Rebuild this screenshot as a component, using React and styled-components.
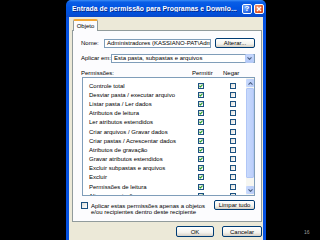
import React from "react";
import styled, { createGlobalStyle } from "styled-components";

const Global = createGlobalStyle`
  html, body { margin: 0; padding: 0; background: #000; }
  body { width: 320px; height: 240px; overflow: hidden; font-family: "Liberation Sans", Arial, sans-serif; }
`;

const Stage = styled.div`
  position: relative;
  width: 320px;
  height: 240px;
  background: #000;
  display: flex;
  overflow: hidden;
`;

const Window = styled.div`
  margin-left: 66px;
  width: 200px;
  height: 246px;
  display: flex;
  flex-direction: column;
`;

const TitleBar = styled.div`
  height: 17px;
  flex: none;
  border-radius: 5px 5px 0 0;
  background: linear-gradient(180deg, #3d8ff7 0%, #0a5ee6 12%, #0054e3 45%, #0250d9 80%, #0a48c8 100%);
  display: flex;
  align-items: center;
  padding: 0 2px 0 6px;
  gap: 2px;
`;

const Title = styled.div`
  flex: 1;
  color: #fff;
  font: bold 6.8px "Liberation Sans", Arial, sans-serif;
  letter-spacing: 0.05px;
  text-shadow: 1px 1px 0 #0a2a8a;
  white-space: nowrap;
  overflow: hidden;
`;

const CapButton = styled.div`
  width: 10px;
  height: 10px;
  border: 1px solid #fff;
  border-radius: 2px;
  box-sizing: border-box;
  display: flex;
  align-items: center;
  justify-content: center;
  color: #fff;
  font: bold 8px "Liberation Sans", Arial, sans-serif;
  background: ${(p) =>
    p.$close
      ? "radial-gradient(circle at 30% 30%, #f3a083, #e35a2b 60%, #c1391a)"
      : "radial-gradient(circle at 30% 30%, #7fb0ff, #2f6ee8 60%, #1c4fc7)"};
`;

const Body = styled.div`
  flex: 1;
  background: #ece9d8;
  border-left: 3px solid #0551e0;
  border-right: 3px solid #0551e0;
  padding: 2px 1px 0 3px;
  display: flex;
  flex-direction: column;
`;

const TabStrip = styled.div`
  height: 11px;
  display: flex;
  align-items: flex-end;
  padding-left: 1px;
`;

const Tab = styled.div`
  width: 25px;
  height: 12px;
  box-sizing: border-box;
  background: #fcfcfe;
  border: 1px solid #919b9c;
  border-bottom: none;
  border-top: 2px solid #f2a735;
  border-radius: 2px 2px 0 0;
  font-size: 6px;
  color: #000;
  display: flex;
  align-items: center;
  justify-content: center;
  margin-bottom: -1px;
  position: relative;
  z-index: 1;
`;

const Panel = styled.div`
  height: 192px;
  box-sizing: border-box;
  background: #fcfcfe;
  border: 1px solid #919b9c;
  padding: 7px 6px 0 8px;
  display: flex;
  flex-direction: column;
  font-size: 6px;
  color: #000;
`;

const FieldRow = styled.div`
  display: flex;
  align-items: center;
  height: ${(p) => p.$h || 10}px;
  margin-bottom: ${(p) => p.$mb || 0}px;
`;

const Label = styled.span`
  width: ${(p) => p.$w}px;
  flex: none;
  white-space: nowrap;
`;

const TextBox = styled.div`
  flex: 1;
  height: 9px;
  box-sizing: border-box;
  border: 1px solid #7f9db9;
  background: #fff;
  padding-left: 2px;
  white-space: nowrap;
  overflow: hidden;
  line-height: 7px;
`;

const Button = styled.div`
  width: ${(p) => p.$w}px;
  height: ${(p) => p.$h || 10}px;
  flex: none;
  box-sizing: border-box;
  border: 1px solid #003c74;
  border-radius: 2px;
  background: linear-gradient(180deg, #ffffff 0%, #f4f3ee 60%, #d6d0c5 100%);
  display: flex;
  align-items: center;
  justify-content: center;
  font-size: 6px;
  color: #000;
  margin-left: ${(p) => p.$ml || 0}px;
  margin-top: ${(p) => p.$mt || 0}px;
  white-space: nowrap;
`;

const Select = styled.div`
  flex: 1;
  height: 9px;
  box-sizing: border-box;
  border: 1px solid #7f9db9;
  background: #fff;
  display: flex;
  align-items: center;
  padding-left: 2px;
  white-space: nowrap;
`;

const SelectText = styled.span`
  flex: 1;
`;

const DropBtn = styled.div`
  width: 7px;
  height: 7px;
  background: linear-gradient(180deg, #c6d7fd, #b2c8f8);
  border: 0.5px solid #b9cdf7;
  border-radius: 1px;
  display: flex;
  align-items: center;
  justify-content: center;
`;

const HeaderRow = styled.div`
  display: flex;
  align-items: center;
  height: 8px;
  margin-top: 2px;
`;

const HeadCol = styled.span`
  width: ${(p) => p.$w}px;
  flex: none;
`;

const ListBox = styled.div`
  height: 119px;
  box-sizing: border-box;
  border: 1px solid #7f9db9;
  background: #fff;
  display: flex;
  overflow: hidden;
  margin-left: 1px;
`;

const Rows = styled.div`
  flex: 1;
  padding-top: 3px;
  overflow: hidden;
`;

const Row = styled.div`
  display: flex;
  align-items: center;
  height: 9.2px;
  padding-left: 6px;
`;

const RowText = styled.span`
  width: 108px;
  flex: none;
  white-space: nowrap;
`;

const CheckCell = styled.div`
  width: ${(p) => p.$w}px;
  flex: none;
  display: flex;
  justify-content: center;
`;

const Box = styled.div`
  width: ${(p) => p.$s || 6}px;
  height: ${(p) => p.$s || 6}px;
  flex: none;
  box-sizing: border-box;
  border: 1px solid #1c5180;
  background: linear-gradient(135deg, #dcdcd7, #ffffff);
  display: flex;
  align-items: center;
  justify-content: center;
  margin-top: ${(p) => p.$mt || 0}px;
`;

const ScrollBar = styled.div`
  width: 8px;
  flex: none;
  background: #f6f6f1;
  display: flex;
  flex-direction: column;
  padding: 1px 0;
  box-sizing: border-box;
`;

const ScrollBtn = styled.div`
  height: 8px;
  flex: none;
  background: linear-gradient(90deg, #c9dafd, #b7cbf8);
  border-radius: 1px;
  display: flex;
  align-items: center;
  justify-content: center;
`;

const Thumb = styled.div`
  height: ${(p) => p.$h}px;
  background: linear-gradient(90deg, #c8d9fc, #bccffb);
  border: 0.5px solid #b0c6f6;
  border-radius: 1px;
  margin: 1px 0;
`;

const Spacer = styled.div`
  flex: 1;
`;

const BottomRow = styled.div`
  display: flex;
  align-items: flex-start;
  margin-top: 4px;
`;

const ApplyText = styled.div`
  flex: 1;
  line-height: 6.4px;
  margin-left: 3px;
  margin-top: 3px;
`;

const Footer = styled.div`
  display: flex;
  justify-content: flex-end;
  gap: 8px;
  padding: 4px 0 0 0;
`;

const SlideNum = styled.div`
  position: absolute;
  left: 304px;
  top: 229px;
  font-size: 5px;
  color: #9a9a9a;
`;

const Check = () => (
  <svg width="4" height="4" viewBox="0 0 7 7">
    <path d="M0.8 3.2 L2.6 5.2 L6.2 1.2" stroke="#21a121" strokeWidth="1.8" fill="none" />
  </svg>
);

const Chevron = ({ up }) => (
  <svg width="5" height="3" viewBox="0 0 5 3">
    <path d={up ? "M0.5 2.6 L2.5 0.6 L4.5 2.6" : "M0.5 0.4 L2.5 2.4 L4.5 0.4"} stroke="#4d6185" strokeWidth="1.1" fill="none" />
  </svg>
);

const perms = [
  "Controle total",
  "Desviar pasta / executar arquivo",
  "Listar pasta / Ler dados",
  "Atributos de leitura",
  "Ler atributos estendidos",
  "Criar arquivos / Gravar dados",
  "Criar pastas / Acrescentar dados",
  "Atributos de gravação",
  "Gravar atributos estendidos",
  "Excluir subpastas e arquivos",
  "Excluir",
  "Permissões de leitura",
  "Alterar permissões",
];

export default function App() {
  return (
    <Stage>
      <Global />
      <Window>
        <TitleBar>
          <Title>Entrada de permissão para Programas e Downlo...</Title>
          <CapButton>?</CapButton>
          <CapButton $close>
            <svg width="6" height="6" viewBox="0 0 6 6">
              <path d="M1 1 L5 5 M5 1 L1 5" stroke="#fff" strokeWidth="1.3" />
            </svg>
          </CapButton>
        </TitleBar>
        <Body>
          <TabStrip>
            <Tab>Objeto</Tab>
          </TabStrip>
          <Panel>
            <FieldRow $mb={5}>
              <Label $w={23}>Nome:</Label>
              <TextBox>Administradores (KASSIANO-PAT\Admi</TextBox>
              <Button $w={40} $ml={4}>
                Alterar...
              </Button>
            </FieldRow>
            <FieldRow $mb={4}>
              <Label $w={30}>Aplicar em:</Label>
              <Select>
                <SelectText>Esta pasta, subpastas e arquivos</SelectText>
                <DropBtn>
                  <Chevron />
                </DropBtn>
              </Select>
            </FieldRow>
            <HeaderRow>
              <HeadCol $w={111}>Permissões:</HeadCol>
              <HeadCol $w={31}>Permitir</HeadCol>
              <HeadCol $w={30}>Negar</HeadCol>
            </HeaderRow>
            <ListBox>
              <Rows>
                {perms.map((p) => (
                  <Row key={p}>
                    <RowText>{p}</RowText>
                    <CheckCell $w={7}>
                      <Box>
                        <Check />
                      </Box>
                    </CheckCell>
                    <CheckCell $w={58}>
                      <Box />
                    </CheckCell>
                  </Row>
                ))}
              </Rows>
              <ScrollBar>
                <ScrollBtn>
                  <Chevron up />
                </ScrollBtn>
                <Thumb $h={88} />
                <Spacer />
                <ScrollBtn>
                  <Chevron />
                </ScrollBtn>
              </ScrollBar>
            </ListBox>
            <BottomRow>
              <Box $s={7} $mt={2} />
              <ApplyText>
                Aplicar estas permissões apenas a objetos
                <br />
                e/ou recipientes dentro deste recipiente
              </ApplyText>
              <Button $w={41}>Limpar tudo</Button>
            </BottomRow>
          </Panel>
          <Footer>
            <Button $w={38} $h={11}>
              OK
            </Button>
            <Button $w={40} $h={11}>
              Cancelar
            </Button>
          </Footer>
        </Body>
      </Window>
      <SlideNum>16</SlideNum>
    </Stage>
  );
}
